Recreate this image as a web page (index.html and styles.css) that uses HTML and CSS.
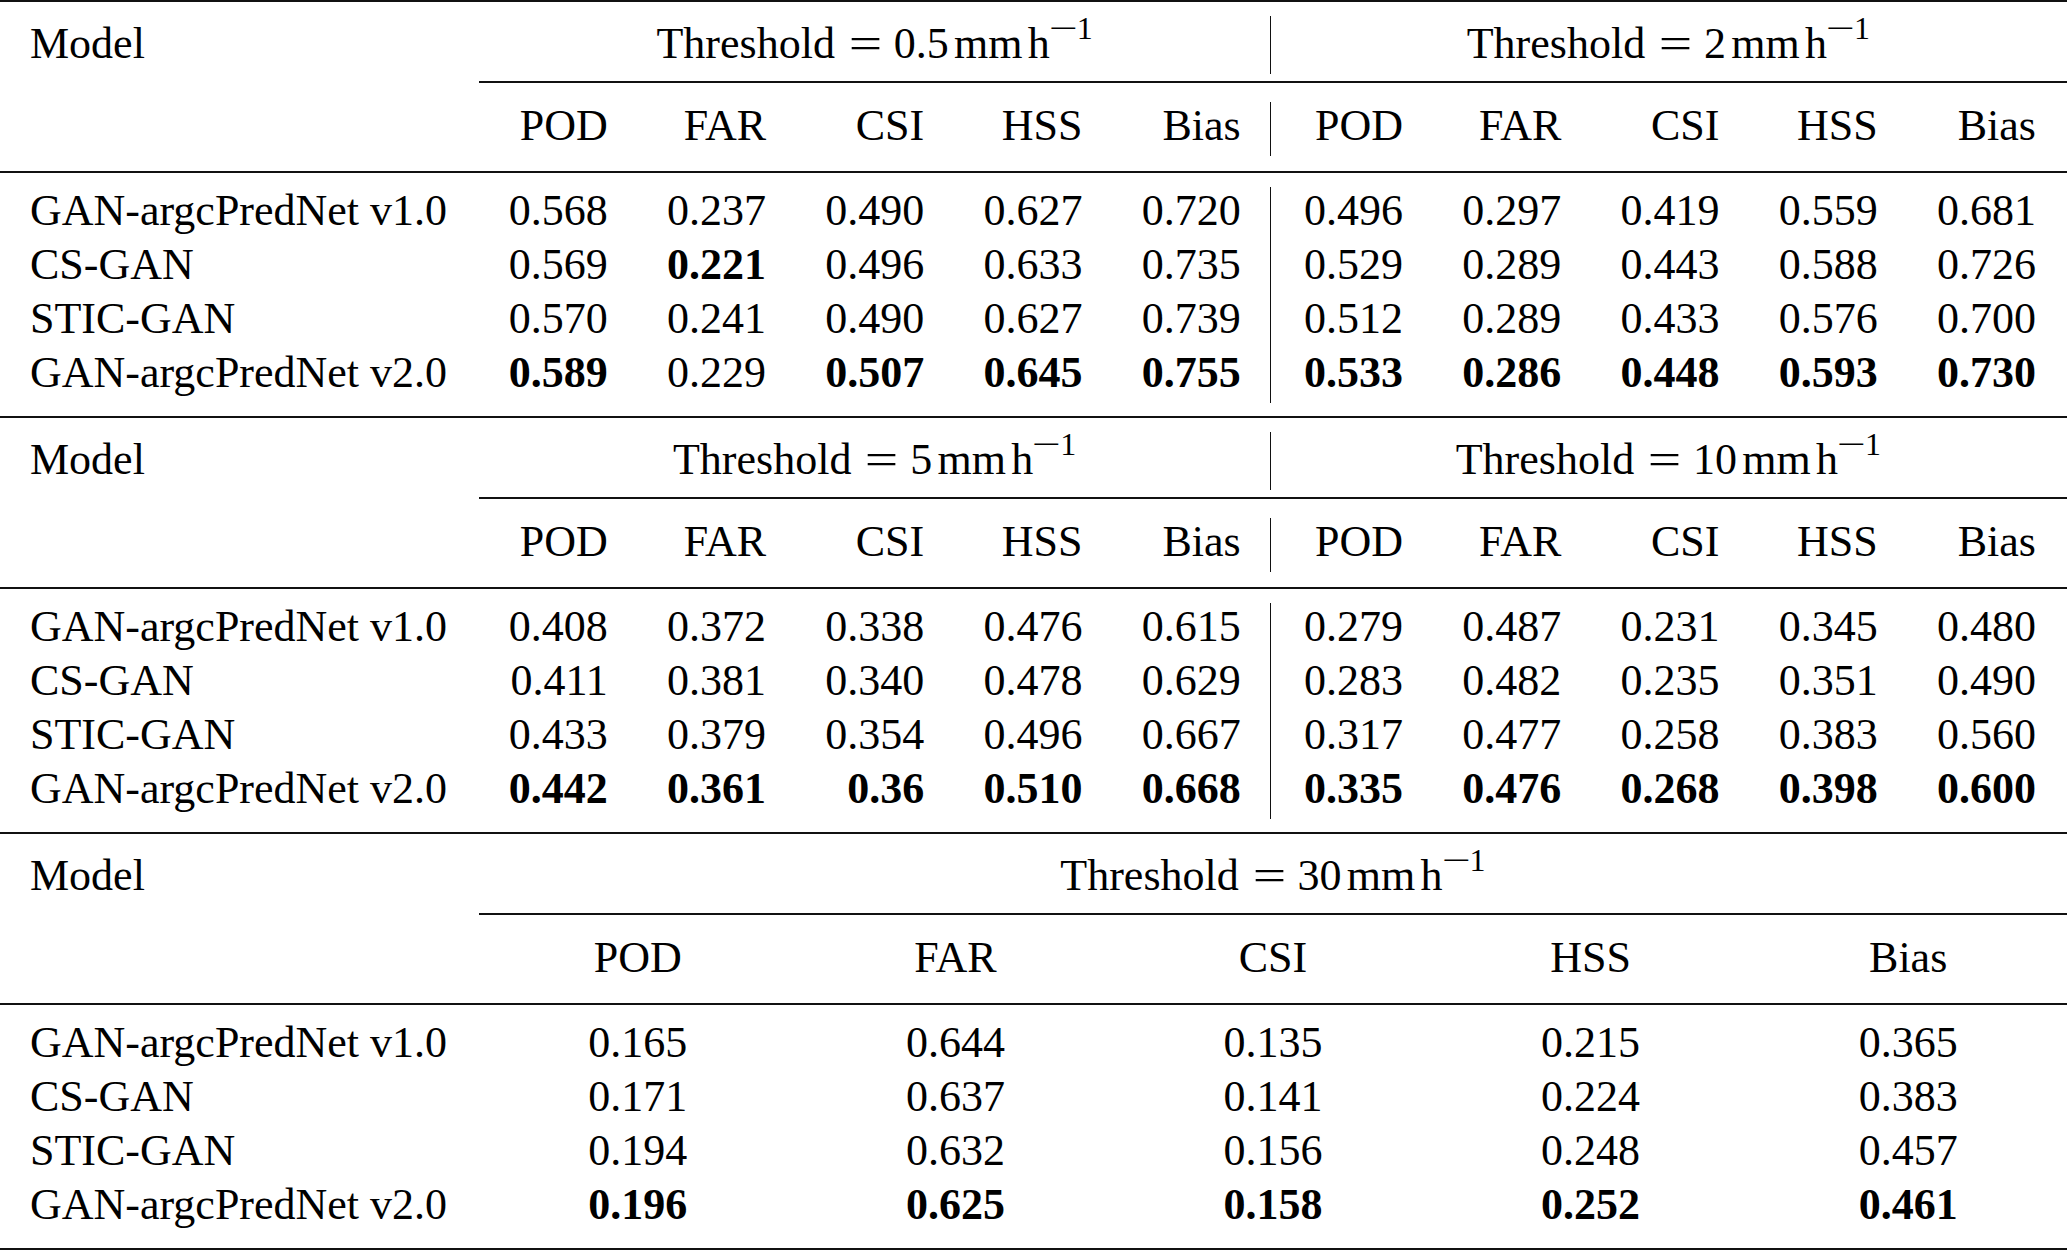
FILE: index.html
```html
<!DOCTYPE html>
<html lang="en">
<head>
<meta charset="utf-8">
<title>Skill scores</title>
<link rel="stylesheet" href="styles.css">
</head>
<body>
<div class="page">

  <section class="sec">
    <div class="r1 g2">
      <div class="m">Model</div>
      <div class="thr">Threshold<span class="eq">=</span>0.5<span class="u">mm</span><span class="u">h</span><sup><span class="mi">−</span>1</sup></div>
      <div class="thr vr">Threshold<span class="eq">=</span>2<span class="u">mm</span><span class="u">h</span><sup><span class="mi">−</span>1</sup></div>
    </div>
    <div class="cl"></div>
    <div class="r2 g2">
      <div class="m"></div>
      <div class="c">POD</div><div class="c">FAR</div><div class="c">CSI</div><div class="c">HSS</div><div class="c">Bias</div>
      <div class="c vr">POD</div><div class="c">FAR</div><div class="c">CSI</div><div class="c">HSS</div><div class="c">Bias</div>
    </div>
    <div class="mr"></div>
    <div class="body">
      <div class="row g2">
        <div class="m">GAN-argcPredNet v1.0</div>
        <div class="c">0.568</div><div class="c">0.237</div><div class="c">0.490</div><div class="c">0.627</div><div class="c">0.720</div>
        <div class="c vr">0.496</div><div class="c">0.297</div><div class="c">0.419</div><div class="c">0.559</div><div class="c">0.681</div>
      </div>
      <div class="row g2">
        <div class="m">CS-GAN</div>
        <div class="c">0.569</div><div class="c"><b>0.221</b></div><div class="c">0.496</div><div class="c">0.633</div><div class="c">0.735</div>
        <div class="c vr">0.529</div><div class="c">0.289</div><div class="c">0.443</div><div class="c">0.588</div><div class="c">0.726</div>
      </div>
      <div class="row g2">
        <div class="m">STIC-GAN</div>
        <div class="c">0.570</div><div class="c">0.241</div><div class="c">0.490</div><div class="c">0.627</div><div class="c">0.739</div>
        <div class="c vr">0.512</div><div class="c">0.289</div><div class="c">0.433</div><div class="c">0.576</div><div class="c">0.700</div>
      </div>
      <div class="row g2">
        <div class="m">GAN-argcPredNet v2.0</div>
        <div class="c"><b>0.589</b></div><div class="c">0.229</div><div class="c"><b>0.507</b></div><div class="c"><b>0.645</b></div><div class="c"><b>0.755</b></div>
        <div class="c vr"><b>0.533</b></div><div class="c"><b>0.286</b></div><div class="c"><b>0.448</b></div><div class="c"><b>0.593</b></div><div class="c"><b>0.730</b></div>
      </div>
    </div>
  </section>

  <section class="sec">
    <div class="r1 g2">
      <div class="m">Model</div>
      <div class="thr">Threshold<span class="eq">=</span>5<span class="u">mm</span><span class="u">h</span><sup><span class="mi">−</span>1</sup></div>
      <div class="thr vr">Threshold<span class="eq">=</span>10<span class="u">mm</span><span class="u">h</span><sup><span class="mi">−</span>1</sup></div>
    </div>
    <div class="cl"></div>
    <div class="r2 g2">
      <div class="m"></div>
      <div class="c">POD</div><div class="c">FAR</div><div class="c">CSI</div><div class="c">HSS</div><div class="c">Bias</div>
      <div class="c vr">POD</div><div class="c">FAR</div><div class="c">CSI</div><div class="c">HSS</div><div class="c">Bias</div>
    </div>
    <div class="mr"></div>
    <div class="body">
      <div class="row g2">
        <div class="m">GAN-argcPredNet v1.0</div>
        <div class="c">0.408</div><div class="c">0.372</div><div class="c">0.338</div><div class="c">0.476</div><div class="c">0.615</div>
        <div class="c vr">0.279</div><div class="c">0.487</div><div class="c">0.231</div><div class="c">0.345</div><div class="c">0.480</div>
      </div>
      <div class="row g2">
        <div class="m">CS-GAN</div>
        <div class="c">0.411</div><div class="c">0.381</div><div class="c">0.340</div><div class="c">0.478</div><div class="c">0.629</div>
        <div class="c vr">0.283</div><div class="c">0.482</div><div class="c">0.235</div><div class="c">0.351</div><div class="c">0.490</div>
      </div>
      <div class="row g2">
        <div class="m">STIC-GAN</div>
        <div class="c">0.433</div><div class="c">0.379</div><div class="c">0.354</div><div class="c">0.496</div><div class="c">0.667</div>
        <div class="c vr">0.317</div><div class="c">0.477</div><div class="c">0.258</div><div class="c">0.383</div><div class="c">0.560</div>
      </div>
      <div class="row g2">
        <div class="m">GAN-argcPredNet v2.0</div>
        <div class="c"><b>0.442</b></div><div class="c"><b>0.361</b></div><div class="c"><b>0.36</b></div><div class="c"><b>0.510</b></div><div class="c"><b>0.668</b></div>
        <div class="c vr"><b>0.335</b></div><div class="c"><b>0.476</b></div><div class="c"><b>0.268</b></div><div class="c"><b>0.398</b></div><div class="c"><b>0.600</b></div>
      </div>
    </div>
  </section>

  <section class="sec last">
    <div class="r1 g1">
      <div class="m">Model</div>
      <div class="thr">Threshold<span class="eq">=</span>30<span class="u">mm</span><span class="u">h</span><sup><span class="mi">−</span>1</sup></div>
    </div>
    <div class="cl"></div>
    <div class="r2 g1">
      <div class="m"></div>
      <div class="c">POD</div><div class="c">FAR</div><div class="c">CSI</div><div class="c">HSS</div><div class="c">Bias</div>
    </div>
    <div class="mr"></div>
    <div class="body">
      <div class="row g1">
        <div class="m">GAN-argcPredNet v1.0</div>
        <div class="c">0.165</div><div class="c">0.644</div><div class="c">0.135</div><div class="c">0.215</div><div class="c">0.365</div>
      </div>
      <div class="row g1">
        <div class="m">CS-GAN</div>
        <div class="c">0.171</div><div class="c">0.637</div><div class="c">0.141</div><div class="c">0.224</div><div class="c">0.383</div>
      </div>
      <div class="row g1">
        <div class="m">STIC-GAN</div>
        <div class="c">0.194</div><div class="c">0.632</div><div class="c">0.156</div><div class="c">0.248</div><div class="c">0.457</div>
      </div>
      <div class="row g1">
        <div class="m">GAN-argcPredNet v2.0</div>
        <div class="c"><b>0.196</b></div><div class="c"><b>0.625</b></div><div class="c"><b>0.158</b></div><div class="c"><b>0.252</b></div><div class="c"><b>0.461</b></div>
      </div>
    </div>
  </section>

</div>
</body>
</html>
```

FILE: styles.css
```css
html, body {
  margin: 0;
  padding: 0;
  background: #ffffff;
}

body {
  font-family: "Liberation Serif", "Times New Roman", serif;
  font-size: 44px;
  color: #000000;
}

.page {
  width: 2067px;
}

.sec {
  display: flex;
  flex-direction: column;
  border-top: 2px solid #111111;
  padding-bottom: 13.5px;
}

.sec.last {
  border-bottom: 2px solid #111111;
}

.g2 {
  display: grid;
  grid-template-columns: 479px repeat(5, 158.25px) 162.25px repeat(4, 158.25px);
}

.g1 {
  display: grid;
  grid-template-columns: 479px repeat(5, 317.6px);
}

.r1 {
  margin-top: 14px;
}

.r1 > div {
  line-height: 55.5px;
  padding-bottom: 2px;
}

.cl {
  margin: 7.5px 0 0 479px;
  border-top: 2px solid #111111;
}

.r2 {
  margin-top: 19px;
}

.r2 > div {
  line-height: 47.5px;
  padding-bottom: 6px;
}

.mr {
  margin-top: 15px;
  border-top: 2px solid #111111;
}

.body {
  display: flex;
  flex-direction: column;
  margin-top: 14px;
}

.row > div {
  line-height: 47px;
  padding-bottom: 7px;
}

.m {
  padding-left: 30px;
  text-align: left;
  white-space: nowrap;
}

.c {
  padding-left: 29.5px;
  padding-right: 29.5px;
  white-space: nowrap;
}

.g2 .c {
  text-align: right;
}

.g1 .c {
  text-align: center;
}

.thr {
  grid-column: span 5;
  text-align: center;
  white-space: nowrap;
}

.vr {
  border-left: 1.7px solid #111111;
}

.eq {
  display: inline-block;
  margin: 0 16px 0 18px;
  transform: scaleX(1.35);
}

.u {
  margin-left: 0.12em;
}

sup {
  font-size: 32px;
  line-height: 0;
  vertical-align: 19px;
}

.mi {
  display: inline-block;
  margin: 0 5px 0 4px;
  transform: scaleX(1.6);
}

b {
  font-weight: 700;
}
```
